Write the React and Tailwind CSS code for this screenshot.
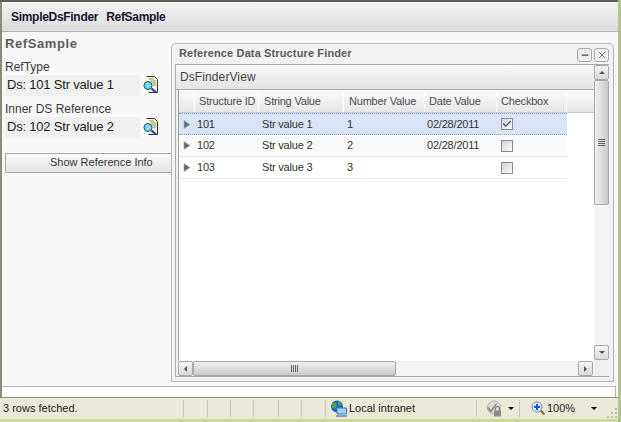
import { Check, Minus, X } from "lucide-react";

const FONT = "font-['Liberation_Sans',Arial,sans-serif]";

const COLUMNS = [
  { label: "Structure ID", width: "w-[64px]", pad: "pl-[4px]" },
  { label: "String Value", width: "w-[85px]", pad: "pl-[5px]" },
  { label: "Number Value", width: "w-[81px]", pad: "pl-[5px]" },
  { label: "Date Value", width: "w-[72px]", pad: "pl-[4px]" },
  { label: "Checkbox", width: "w-[70px]", pad: "pl-[4px]" },
];

const ROWS = [
  { id: "101", str: "Str value 1", num: "1", date: "02/28/2011", checked: true, selected: true },
  { id: "102", str: "Str value 2", num: "2", date: "02/28/2011", striped: true },
  { id: "103", str: "Str value 3", num: "3", date: "" },
];

function FinderIcon() {
  return (
    <svg width="16" height="18" viewBox="0 0 16 18" className="shrink-0">
      <path d="M3.5.5h8l3 3v13h-9" fill="#f7f2cf" stroke="#333" />
      <path d="M6 3h5M8 5h5M9 7h4M10 9h3" stroke="#9a9670" />
      <circle cx="5" cy="9.5" r="4" fill="#63d3e6" stroke="#28506f" />
      <path d="M3 8.5l2-1.5M4 11l3-2" stroke="#d8f6fa" />
      <path d="M8.5 12.5l4.5 4" stroke="#1a3fc0" strokeWidth="2.2" />
    </svg>
  );
}

function Arrow() {
  return (
    <svg width="8" height="9" viewBox="0 0 8 9" className="shrink-0">
      <path d="M1 .5v8l6-4z" fill="#5f6b78" stroke="#a5adb5" strokeWidth=".7" />
    </svg>
  );
}

function LookupField({ label, value }) {
  return (
    <div>
      <div className="h-[16px] text-[12px] leading-[16px] text-[#3a3a3a]">{label}</div>
      <div className="flex items-center">
        <div className="h-[21px] w-[135px] bg-[#f0f0f0] pl-[2px] text-[13px] leading-[20px] tracking-[-.2px] text-[#222]">
          {value}
        </div>
        <div className="ml-[3px]">
          <FinderIcon />
        </div>
      </div>
    </div>
  );
}

function ScrollButton({ children, className = "" }) {
  return (
    <div className={`flex items-center justify-center rounded-[2px] border border-[#a9a9a9] bg-gradient-to-b from-[#f6f6f6] to-[#d8d8d8] ${className}`}>
      {children}
    </div>
  );
}

function VerticalScrollbar() {
  return (
    <div className="flex w-[15px] flex-1 shrink-0 flex-col bg-[#f3f3f3]">
      <ScrollButton className="h-[15px] w-[15px]">
        <div className="h-0 w-0 border-x-[3px] border-b-[3px] border-x-transparent border-b-[#555]" />
      </ScrollButton>
      <div className="flex h-[125px] w-[15px] flex-col items-center justify-center gap-[1px] rounded-[2px] border border-[#a9a9a9] bg-gradient-to-r from-[#f0f0f0] to-[#c9c9c9]">
        <div className="h-[1px] w-[7px] bg-[#666]" />
        <div className="h-[1px] w-[7px] bg-[#666]" />
        <div className="h-[1px] w-[7px] bg-[#666]" />
        <div className="h-[1px] w-[7px] bg-[#666]" />
      </div>
      <div className="flex-1" />
      <ScrollButton className="h-[15px] w-[15px]">
        <div className="h-0 w-0 border-x-[3px] border-t-[3px] border-x-transparent border-t-[#555]" />
      </ScrollButton>
    </div>
  );
}

function HorizontalScrollbar() {
  return (
    <div className="flex h-[15px] shrink-0 items-stretch bg-[#f3f3f3]">
      <ScrollButton className="w-[15px]">
        <div className="h-0 w-0 border-y-[3px] border-r-[3px] border-y-transparent border-r-[#555]" />
      </ScrollButton>
      <div className="flex w-[203px] items-center justify-center rounded-[2px] border border-[#a9a9a9] bg-gradient-to-b from-[#f0f0f0] to-[#c9c9c9]">
        <div className="flex gap-[1px]">
          <div className="h-[7px] w-[1px] bg-[#666]" />
          <div className="h-[7px] w-[1px] bg-[#666]" />
          <div className="h-[7px] w-[1px] bg-[#666]" />
          <div className="h-[7px] w-[1px] bg-[#666]" />
        </div>
      </div>
      <div className="flex-1" />
      <ScrollButton className="w-[15px]">
        <div className="h-0 w-0 border-y-[3px] border-l-[3px] border-y-transparent border-l-[#555]" />
      </ScrollButton>
      <div className="w-[1px]" />
    </div>
  );
}

function Grid() {
  return (
    <div className="flex min-h-0 flex-1 flex-col border-l border-[#a0a0a0] bg-white">
      <div className="flex h-[23px] shrink-0 border-b border-[#c4ccd6] bg-gradient-to-b from-[#fbfbfb] to-[#e6e6e6]">
        <div className="w-[16px] shrink-0 border-r border-white" />
        {COLUMNS.map((col) => (
          <div
            key={col.label}
            className={`${col.width} ${col.pad} shrink-0 whitespace-nowrap border-r border-white text-[11px] leading-[22px] tracking-[-.2px] text-[#4b4b55]`}
          >
            {col.label}
          </div>
        ))}
      </div>
      {ROWS.map((row) => (
        <div
          key={row.id}
          className={`flex h-[22px] w-[388px] shrink-0 items-center text-[11px] tracking-[-.2px] text-[#333] ${
            row.selected
              ? "border-y border-dotted border-[#7f9fd8] bg-[#d9e4f6]"
              : "border-b border-[#e8e8e8]"
          } ${row.striped ? "bg-[#fafafa]" : ""}`}
        >
          <div className="flex w-[16px] shrink-0 justify-center">
            <Arrow />
          </div>
          <div className="w-[64px] shrink-0 pl-[2px]">{row.id}</div>
          <div className="w-[85px] shrink-0 pl-[3px]">{row.str}</div>
          <div className="w-[81px] shrink-0 pl-[3px]">{row.num}</div>
          <div className="w-[72px] shrink-0 pl-[2px]">{row.date}</div>
          <div className="w-[70px] shrink-0 pl-[4px]">
            <div className="flex h-[12px] w-[12px] items-center justify-center border border-[#8b8b8b] bg-gradient-to-br from-[#d5d5d5] to-[#fafafa]">
              {row.checked && <Check size={10} strokeWidth={3} className="text-[#3b4f8f]" />}
            </div>
          </div>
        </div>
      ))}
    </div>
  );
}

function FinderWindow() {
  return (
    <div className="mt-[11px] mb-[4px] flex w-[443px] shrink-0 flex-col rounded-t-[5px] border border-[#b5b5b5] bg-[#f2f2f2]">
      <div className="flex h-[20px] shrink-0 items-center justify-between pl-[7px] pr-[4px]">
        <span className="-mt-[2px] text-[11px] font-bold tracking-[.13px] text-[#5a5a5a]">Reference Data Structure Finder</span>
        <div className="mt-[1px] flex gap-[2px]">
          <div className="flex h-[14px] w-[15px] items-center justify-center rounded-[3px] border border-[#aaa] bg-[#eee]">
            <Minus size={10} strokeWidth={3} className="text-[#444]" />
          </div>
          <div className="flex h-[14px] w-[15px] items-center justify-center rounded-[3px] border border-[#aaa] bg-[#f4f4f4]">
            <X size={12} strokeWidth={1.5} className="text-[#444]" />
          </div>
        </div>
      </div>
      <div className="ml-[3px] mr-[4px] mb-[4px] flex min-h-0 flex-1 border border-r-0 border-[#ababab] bg-[#efefef]">
        <div className="flex min-w-0 flex-1 flex-col">
          <div className="h-[25px] shrink-0 border-b border-[#ababab] bg-gradient-to-b from-[#f8f8f8] to-[#e3e3e3] pl-[4px] text-[12px] leading-[24px] tracking-[.1px] text-[#444]">
            DsFinderView
          </div>
          <div className="flex min-h-0 flex-1 flex-col pl-[2px]">
            <Grid />
            <HorizontalScrollbar />
          </div>
        </div>
        <div className="flex flex-col pb-[16px]">
          <VerticalScrollbar />
        </div>
      </div>
    </div>
  );
}

function StatusCell({ className = "" }) {
  return <div className={`h-[17px] border-l border-[#c9c5b2] ${className}`} />;
}

function GlobeIcon() {
  return (
    <svg width="18" height="18" viewBox="0 0 18 18" className="shrink-0">
      <circle cx="7" cy="6.5" r="6" fill="#2a63c8" />
      <path d="M2 3c3-1 5 0 4.500 3S3 9 2 7zM8 1l4 2-1 3-3-1z" fill="#46a83e" />
      <path d="M7 8h9.500v6H7z" fill="#9fd4f2" stroke="#3a78b5" />
      <path d="M6 15h11v2H6z" fill="#7fa0c4" />
    </svg>
  );
}

function SecurityIcon() {
  return (
    <svg width="17" height="17" viewBox="0 0 17 17" className="shrink-0">
      <circle cx="8" cy="7.500" r="6.500" fill="#dcdcd8" stroke="#b4b4b0" />
      <path d="M1 8l2-1 2 3 5-7 1 1-6 9z" fill="#8c8c8c" />
      <path d="M9.500 10.500V8.500a2 2 0 014 0v2" fill="none" stroke="#777" strokeWidth="1.200" />
      <rect x="8" y="10.500" width="7" height="6" fill="#8a8a8a" />
    </svg>
  );
}

function ZoomIcon() {
  return (
    <svg width="15" height="15" viewBox="0 0 15 15" className="shrink-0">
      <path d="M9.500 9.500l4 4" stroke="#8a6a3a" strokeWidth="2.200" />
      <circle cx="6" cy="6" r="5" fill="#e6f3ff" stroke="#5a8ac4" />
      <path d="M6 3v6M3 6h6" stroke="#0f55d8" strokeWidth="2" />
    </svg>
  );
}

function StatusBar() {
  return (
    <div className="relative flex h-[22px] shrink-0 items-center border-t border-[#8f8c7d] bg-[#ece9d8] text-[11px] text-[#222]">
      <div className="w-[183px] pl-[3px]">3 rows fetched.</div>
      <StatusCell className="w-[24px]" />
      <StatusCell className="w-[23px]" />
      <StatusCell className="w-[23px]" />
      <StatusCell className="w-[25px]" />
      <StatusCell className="w-[23px]" />
      <StatusCell className="w-[24px]" />
      <StatusCell />
      <div className="flex w-[150px] items-center gap-[1px] pl-[4px]">
        <GlobeIcon />
        <span>Local intranet</span>
      </div>
      <StatusCell />
      <div className="flex w-[42px] items-center pl-[9px]">
        <SecurityIcon />
        <div className="ml-[5px] h-0 w-0 border-x-[3px] border-t-[3px] border-x-transparent border-t-black" />
      </div>
      <StatusCell />
      <div className="flex flex-1 items-center pl-[11px]">
        <ZoomIcon />
        <span className="ml-[1px]">100%</span>
        <div className="ml-[16px] h-0 w-0 border-x-[3px] border-t-[3px] border-x-transparent border-t-black" />
      </div>
      <div className="absolute bottom-[1px] right-[1px] grid grid-cols-3 gap-[2px]">
        <div className="col-start-3 h-[2px] w-[2px] bg-[#bdbaa8]" />
        <div className="col-start-2 h-[2px] w-[2px] bg-[#bdbaa8]" />
        <div className="h-[2px] w-[2px] bg-[#bdbaa8]" />
        <div className="h-[2px] w-[2px] bg-[#bdbaa8]" />
        <div className="h-[2px] w-[2px] bg-[#bdbaa8]" />
        <div className="h-[2px] w-[2px] bg-[#bdbaa8]" />
      </div>
    </div>
  );
}

export default function App() {
  return (
    <div className={`${FONT} flex h-[422px] w-[621px] flex-col overflow-hidden border-r-[3px] border-[#b4c28e] bg-[#f8f8f8] antialiased`}>
      <div className="h-[2px] shrink-0 bg-[#5f5f55]" />
      <div className="flex min-h-0 flex-1 flex-col border-l-[2px] border-[#8d8a7c]">
        <div className="flex h-[30px] shrink-0 items-center gap-[8px] border-b border-[#b5b5b5] bg-gradient-to-b from-[#f3f3f3] to-[#dcdcdc] pl-[9px] text-[12px] font-bold tracking-[-.3px] text-[#151530]">
          <span>SimpleDsFinder</span>
          <span>RefSample</span>
        </div>
        <div className="flex min-h-0 flex-1">
          <div className="w-[169px] shrink-0 pl-[3px]">
            <div className="mt-[2px] text-[13px] font-bold tracking-[.6px] text-[#5a5a5a]">RefSample</div>
            <div className="mt-[5px] flex flex-col gap-[5px]">
              <LookupField label="RefType" value="Ds: 101 Str value 1" />
              <LookupField label="Inner DS Reference" value="Ds: 102 Str value 2" />
            </div>
            <div className="mt-[15px] flex h-[20px] items-center rounded-l-[2px] border border-r-0 border-[#a9a9a9] bg-gradient-to-b from-[#fbfbfb] to-[#e4e4e4] pl-[44px] text-[11px] text-[#333]">
              Show Reference Info
            </div>
          </div>
          <FinderWindow />
        </div>
        <div className="mr-[2px] h-[11px] shrink-0 border-t border-r border-[#b5b5b5] bg-white" />
      </div>
      <StatusBar />
      <div className="h-[3px] shrink-0 bg-[#cdd89a]" />
    </div>
  );
}
